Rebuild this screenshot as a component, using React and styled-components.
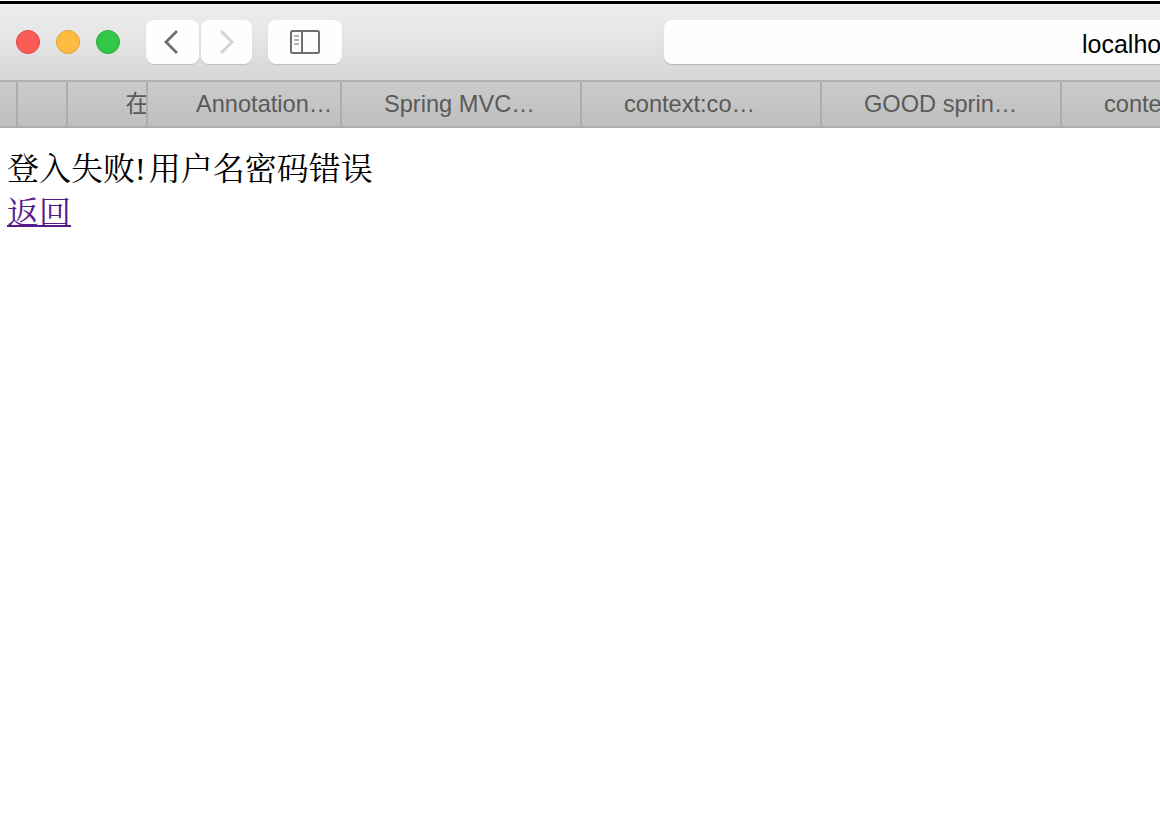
import React from 'react';
import styled, { createGlobalStyle } from 'styled-components';

const Global = createGlobalStyle`
html, body {
  margin: 0;
  padding: 0;
  height: 100%;
  overflow: hidden;
  background: #fff;
}
`;

const Window = styled.div`
  width: 1160px;
  height: 814px;
  box-sizing: border-box;
  padding-top: 1px;
  overflow: hidden;
  display: flex;
  flex-direction: column;
  background: #fff;
`;

const Toolbar = styled.div`
  height: 79px;
  flex: none;
  box-sizing: border-box;
  border-top: 3px solid #000;
  padding: 16px 0 0 16px;
  display: flex;
  align-items: flex-start;
  background: linear-gradient(to bottom, #eeeeee, #e6e6e6 40%, #d7d7d7);
`;

const Lights = styled.div`
  display: flex;
  gap: 16px;
  margin-top: 10px;
  margin-right: 26px;
`;

const Light = styled.span`
  width: 24px;
  height: 24px;
  box-sizing: border-box;
  border-radius: 50%;
  background: ${p => p.$fill};
  border: 1px solid ${p => p.$edge};
`;

const Btn = styled.div`
  height: 44px;
  width: ${p => p.$w}px;
  margin-right: ${p => p.$mr}px;
  flex: none;
  display: flex;
  align-items: center;
  justify-content: center;
  background: #fefefe;
  border-radius: 8px;
  box-shadow: 0 1px 1px rgba(0, 0, 0, 0.14);
`;

const Address = styled.div`
  flex: none;
  width: 600px;
  height: 44px;
  box-sizing: border-box;
  padding-left: 418px;
  background: #fefefe;
  border-radius: 8px 0 0 8px;
  box-shadow: 0 1px 1px rgba(0, 0, 0, 0.18);
  font: 25px/48px "Liberation Sans", Arial, sans-serif;
  color: #000;
  white-space: nowrap;
  overflow: hidden;
`;

const TabBar = styled.div`
  height: 48px;
  flex: none;
  box-sizing: border-box;
  border-top: 2px solid #b0b0b0;
  border-bottom: 2px solid #adadad;
  display: flex;
  background: linear-gradient(to bottom, #cbcbcb, #bfbfbf);
`;

const Tab = styled.div`
  flex: none;
  width: ${p => p.$w}px;
  box-sizing: border-box;
  border-right: 2px solid #adadad;
  font: 23.6px/45px "Liberation Sans", Arial, "Noto Sans CJK SC", sans-serif;
  color: #5a5a5a;
  text-align: ${p => (p.$end ? 'right' : 'left')};
  white-space: nowrap;
  overflow: hidden;
  padding-left: ${p => p.$pad || 0}px;
`;

const ClippedGlyph = styled.span`
  display: inline-block;
  margin-right: -3px;
`;

const Page = styled.div`
  padding: 19px 0 0 7px;
  font-family: "Liberation Serif", "Noto Serif CJK SC", "Noto Sans CJK SC", serif;
  font-size: 32px;
  line-height: 44px;
  color: #000;
`;

const Message = styled.div`
  word-spacing: -5px;
`;

const Back = styled.a`
  color: #551a8b;
  text-decoration: underline;
  text-decoration-thickness: 2px;
  display: block;
  width: fit-content;
`;

const App = () => {
  return (
    <>
      <Global />
      <Window>
        <Toolbar>
          <Lights>
            <Light $fill="#fc5c58" $edge="#e2463f" />
            <Light $fill="#fdbc40" $edge="#e0a030" />
            <Light $fill="#33c748" $edge="#28ad38" />
          </Lights>
          <Btn $w={53} $mr={2}>
            <svg width="18" height="26" viewBox="0 0 18 26" fill="none">
              <path d="M13 2 L2 13 L13 24" stroke="#6f6f6f" strokeWidth="2.8" />
            </svg>
          </Btn>
          <Btn $w={51} $mr={16}>
            <svg width="18" height="26" viewBox="0 0 18 26" fill="none">
              <path d="M3 2 L14 13 L3 24" stroke="#d2d2d2" strokeWidth="2.8" />
            </svg>
          </Btn>
          <Btn $w={74} $mr={322}>
            <svg width="30" height="24" viewBox="0 0 30 24" fill="none">
              <rect x="1" y="1" width="28" height="22" rx="1.5" stroke="#6f6f6f" strokeWidth="2" />
              <path d="M12 1 V23" stroke="#6f6f6f" strokeWidth="2" />
              <path d="M4 6 H9 M4 10 H9 M4 14 H9" stroke="#9a9a9a" strokeWidth="1.6" />
            </svg>
          </Btn>
          <Address>localhost:8080</Address>
        </Toolbar>
        <TabBar>
          <Tab $w={18} />
          <Tab $w={50} />
          <Tab $w={80} $end><ClippedGlyph>在</ClippedGlyph></Tab>
          <Tab $w={194} $pad={48}>Annotation…</Tab>
          <Tab $w={240} $pad={42}>Spring MVC…</Tab>
          <Tab $w={240} $pad={42}>context:co…</Tab>
          <Tab $w={240} $pad={42}>GOOD sprin…</Tab>
          <Tab $w={240} $pad={42}>context</Tab>
        </TabBar>
        <Page>
          <Message>登入失败! 用户名密码错误</Message>
          <Back href="#">返回</Back>
        </Page>
      </Window>
    </>
  );
};

export default App;
